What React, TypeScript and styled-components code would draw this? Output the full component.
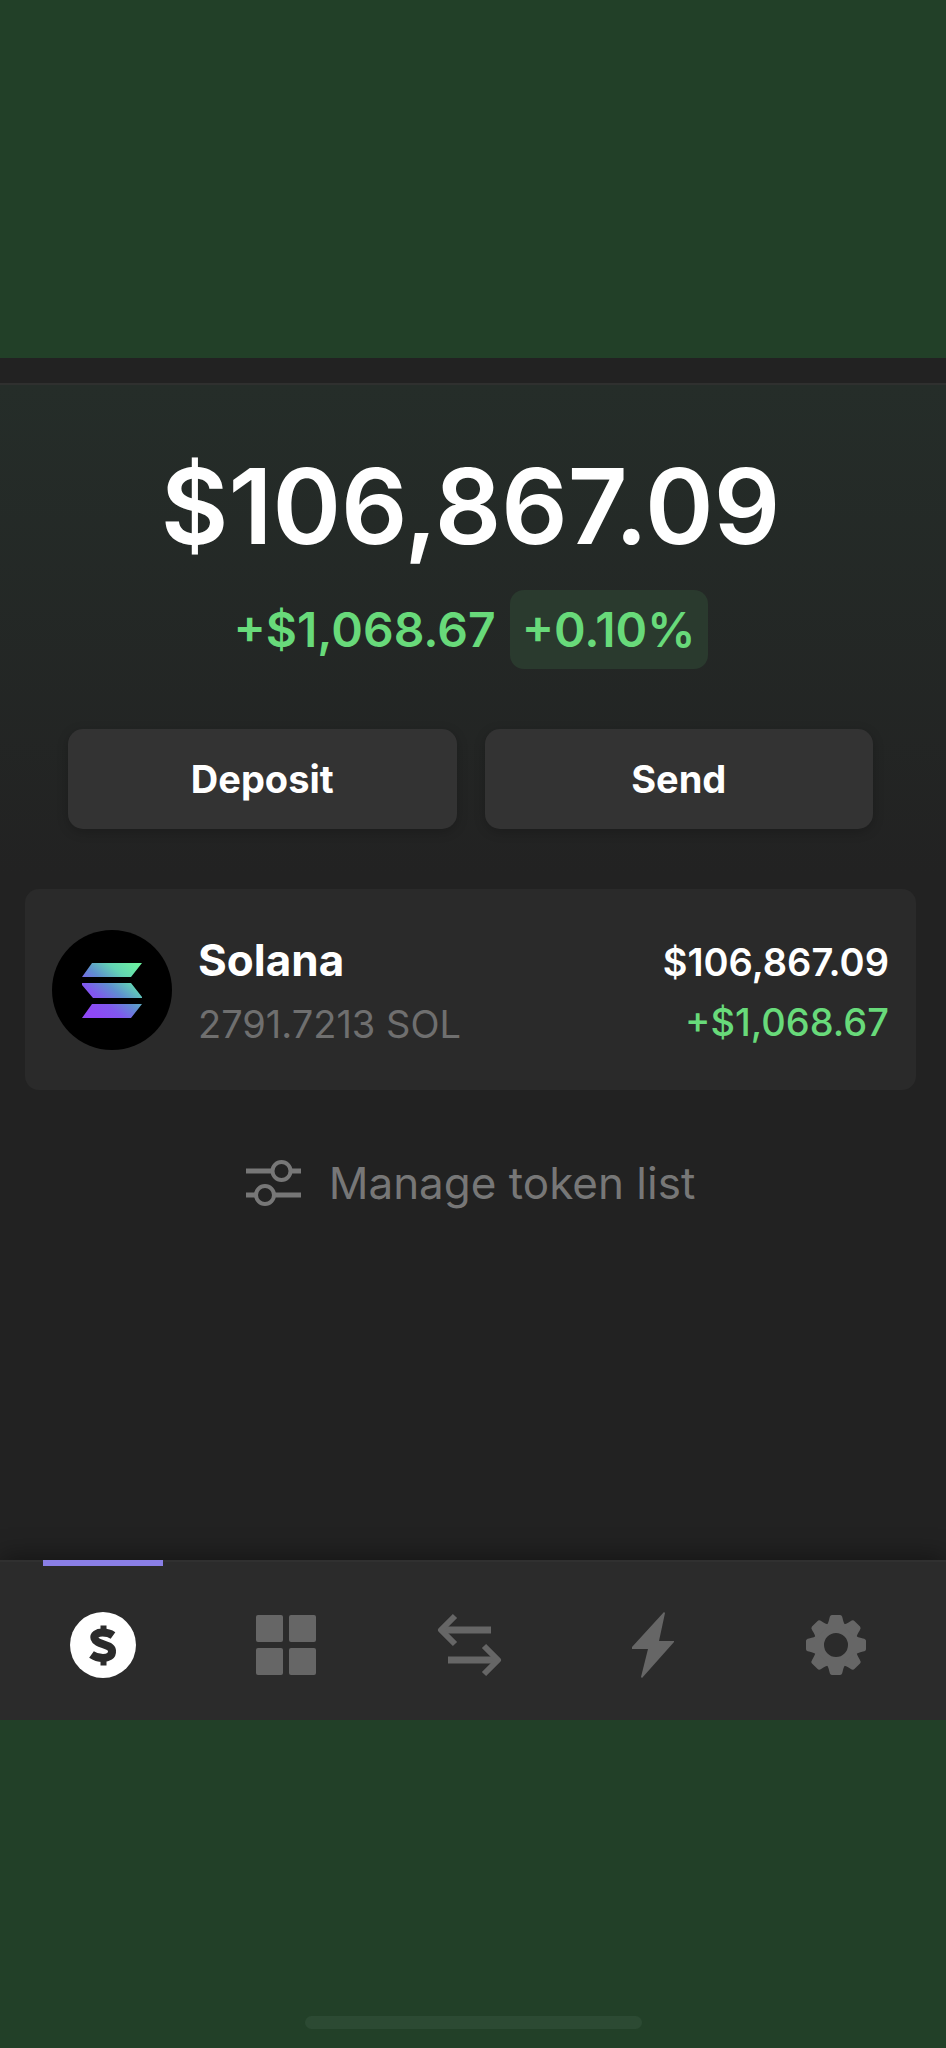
import React from 'react';
import styled, { createGlobalStyle } from 'styled-components';

const color = {
  backdrop: '#224028',
  page: '#222222',
  card: '#2a2a2a',
  nav: '#2b2b2b',
  button: '#333333',
  gain: '#68da7a',
  gainChip: '#2a3a2e',
  text: '#ffffff',
  muted: '#777777',
  icon: '#666666',
  accent: '#8a7fe6',
};

const GlobalStyle = createGlobalStyle`
  *, *::before, *::after { box-sizing: border-box; }
  body {
    margin: 0;
    background: ${color.backdrop};
    color: ${color.text};
    font-family: Inter, "Liberation Sans", sans-serif;
  }
  button { font-family: inherit; border: 0; cursor: pointer; }
`;

const Page = styled.div`
  display: flex;
  flex-direction: column;
  min-height: 100vh;
  padding-top: 358px;
`;

const Screen = styled.div`
  display: flex;
  flex: 1;
  flex-direction: column;
  padding-top: 25px;
  background: ${color.page};
`;

const Wallet = styled.main`
  display: flex;
  flex: 1;
  flex-direction: column;
  padding: 57px 5px 60px 0;
  border-top: 2px solid #2f302f;
  background: linear-gradient(#252d29, ${color.page} 490px);
`;

const Balance = styled.h1`
  margin: 0;
  font-size: 104px;
  font-weight: 600;
  line-height: 128px;
  text-align: center;
`;

const ChangeRow = styled.div`
  display: flex;
  align-items: center;
  justify-content: center;
  gap: 14px;
  margin-top: 20px;
  color: ${color.gain};
  font-size: 48px;
  font-weight: 600;
  line-height: 51px;
`;

const Chip = styled.span`
  padding: 14px 12px;
  border-radius: 14px;
  background: ${color.gainChip};
`;

const Actions = styled.div`
  display: grid;
  grid-template-columns: 1fr 1fr;
  gap: 28px;
  margin-top: 60px;
  padding: 0 68px;
`;

const ActionButton = styled.button`
  height: 100px;
  border-radius: 15px;
  background: ${color.button};
  box-shadow: 0 3px 12px rgba(0, 0, 0, 0.2);
  color: ${color.text};
  font-size: 38px;
  font-weight: 700;
`;

const TokenCard = styled.section`
  display: flex;
  align-items: center;
  gap: 26px;
  margin: 60px 25px 0;
  padding: 34px 27px;
  border-radius: 14px;
  background: ${color.card};
`;

const TokenText = styled.div`
  flex: 1;
  padding-top: 5px;
`;

const TokenName = styled.h2`
  margin: 0;
  font-size: 44px;
  font-weight: 700;
  line-height: 64px;
`;

const TokenAmount = styled.p`
  margin: 0;
  color: #6f6f6f;
  font-size: 38px;
  line-height: 64px;
`;

const TokenValue = styled.div`
  padding-top: 5px;
  font-size: 38px;
  line-height: 60px;
  text-align: right;
`;

const Fiat = styled.p`
  margin: 0;
  font-weight: 600;
`;

const Gain = styled.p`
  margin: 0;
  color: ${color.gain};
  font-weight: 500;
`;

const ManageButton = styled.button`
  display: flex;
  align-items: center;
  align-self: center;
  gap: 28px;
  margin-top: 61px;
  padding: 0;
  background: none;
  color: ${color.muted};
  font-size: 44px;
  line-height: 64px;
`;

const NavBar = styled.nav`
  position: relative;
  display: grid;
  grid-template-columns: repeat(5, 1fr);
  height: 160px;
  padding: 0 18px 0 11px;
  background: ${color.nav};
  box-shadow: 0 -4px 24px rgba(0, 0, 0, 0.4), inset 0 2px 0 #303030;
`;

const Tab = styled.button<{ $active?: boolean }>`
  display: flex;
  flex-direction: column;
  align-items: center;
  padding: 0;
  background: none;
  color: ${(p) => (p.$active ? color.text : color.icon)};

  &::before {
    content: '';
    width: 120px;
    height: 6px;
    background: ${(p) => (p.$active ? color.accent : 'transparent')};
  }
`;

const TabIcon = styled.span`
  display: flex;
  flex: 1;
  align-items: center;
  padding-top: 4px;
`;

const BottomArea = styled.footer`
  position: relative;
  display: flex;
  align-items: flex-end;
  justify-content: center;
  height: 328px;
  padding-bottom: 19px;
  background: ${color.backdrop};
`;

const HomeBar = styled.div`
  width: 337px;
  height: 13px;
  border-radius: 7px;
  background: #2c4a33;
`;

const SolanaLogo = () => (
  <svg width="120" height="120" viewBox="0 0 120 120" role="img" aria-label="Solana">
    <defs>
      <linearGradient id="sol" gradientUnits="userSpaceOnUse" x1="36" y1="86" x2="82" y2="32">
        <stop offset="0.08" stopColor="#8f48f5" />
        <stop offset="0.3" stopColor="#8058ee" />
        <stop offset="0.52" stopColor="#5f8fd0" />
        <stop offset="0.75" stopColor="#62d3b4" />
        <stop offset="1" stopColor="#6cf0a0" />
      </linearGradient>
    </defs>
    <circle cx="60" cy="60" r="60" fill="#000" />
    <path
      fill="url(#sol)"
      d="M40 33H90L79 47H30ZM30 53H79L90 67V68H41L30 55ZM40 74H90L79 88H30Z"
    />
  </svg>
);

const SlidersIcon = () => (
  <svg width="55" height="46" viewBox="0 0 55 46" fill="none" stroke="currentColor" aria-hidden="true">
    <path strokeWidth="5" d="M0 11H26M45 11H55M0 35H10M28 35H55" />
    <circle cx="35.5" cy="11" r="9" strokeWidth="4" />
    <circle cx="19" cy="35" r="9" strokeWidth="4" />
  </svg>
);

const DollarIcon = () => (
  <svg width="66" height="66" viewBox="0 0 66 66" fill="none" aria-hidden="true">
    <circle cx="33" cy="33" r="33" fill="currentColor" />
    <g stroke={color.nav}>
      <path
        strokeWidth="8"
        d="M43 23.500C39.500 21 36 20.500 32.500 20.500C27 20.500 23.500 23 24.500 26.500C26.500 33 41 31.500 42 38.500C42.500 44 38 46 33 46C29 46 25 45 21.500 42.500"
      />
      <path strokeWidth="6" d="M33.500 13.500V21M33.500 45V53.500" />
    </g>
  </svg>
);

const GridIcon = () => (
  <svg width="60" height="60" viewBox="0 0 60 60" fill="currentColor" aria-hidden="true">
    <rect width="27" height="27" rx="2" />
    <rect x="33" width="27" height="27" rx="2" />
    <rect y="33" width="27" height="27" rx="2" />
    <rect x="33" y="33" width="27" height="27" rx="2" />
  </svg>
);

const SwapIcon = () => (
  <svg width="65" height="64" viewBox="0 0 65 64" fill="none" stroke="currentColor" aria-hidden="true">
    <path strokeWidth="7" d="M54 17H6M11 47H59" />
    <path strokeWidth="6" strokeLinejoin="round" d="M18 3L4 17L18 31M47 33L61 47L47 61" />
  </svg>
);

const BoltIcon = () => (
  <svg width="42" height="66" viewBox="0 0 42 66" fill="currentColor" aria-hidden="true">
    <path d="M32 0L0 35V37H16L9 65L10 66L42 30V29H27L33 1Z" />
  </svg>
);

const GearIcon = () => (
  <svg width="60" height="60" viewBox="-30 -30 60 60" aria-hidden="true">
    <circle r="17" fill="none" stroke="currentColor" strokeWidth="10" />
    {[0, 45, 90, 135, 180, 225, 270, 315].map((angle) => (
      <path
        key={angle}
        transform={`rotate(${angle})`}
        fill="currentColor"
        d="M-10 -19C-8 -21 -7.500 -23 -6.500 -27Q-6 -30 -4 -30H4Q6 -30 6.500 -27C7.500 -23 8 -21 10 -19Z"
      />
    ))}
  </svg>
);

const tabs = [
  { label: 'Wallet', Icon: DollarIcon, active: true },
  { label: 'Collectibles', Icon: GridIcon },
  { label: 'Swap', Icon: SwapIcon },
  { label: 'Activity', Icon: BoltIcon },
  { label: 'Settings', Icon: GearIcon },
];

export default function App() {
  return (
    <>
      <GlobalStyle />
      <Page>
        <Screen>
          <Wallet>
            <Balance>$106,867.09</Balance>
            <ChangeRow>
              <span>+$1,068.67</span>
              <Chip>+0.10%</Chip>
            </ChangeRow>
            <Actions>
              <ActionButton type="button">Deposit</ActionButton>
              <ActionButton type="button">Send</ActionButton>
            </Actions>
            <TokenCard>
              <SolanaLogo />
              <TokenText>
                <TokenName>Solana</TokenName>
                <TokenAmount>2791.7213 SOL</TokenAmount>
              </TokenText>
              <TokenValue>
                <Fiat>$106,867.09</Fiat>
                <Gain>+$1,068.67</Gain>
              </TokenValue>
            </TokenCard>
            <ManageButton type="button">
              <SlidersIcon />
              Manage token list
            </ManageButton>
          </Wallet>
          <NavBar>
            {tabs.map(({ label, Icon, active }) => (
              <Tab key={label} type="button" aria-label={label} aria-current={active ? 'page' : undefined} $active={active}>
                <TabIcon>
                  <Icon />
                </TabIcon>
              </Tab>
            ))}
          </NavBar>
        </Screen>
        <BottomArea>
          <HomeBar />
        </BottomArea>
      </Page>
    </>
  );
}
